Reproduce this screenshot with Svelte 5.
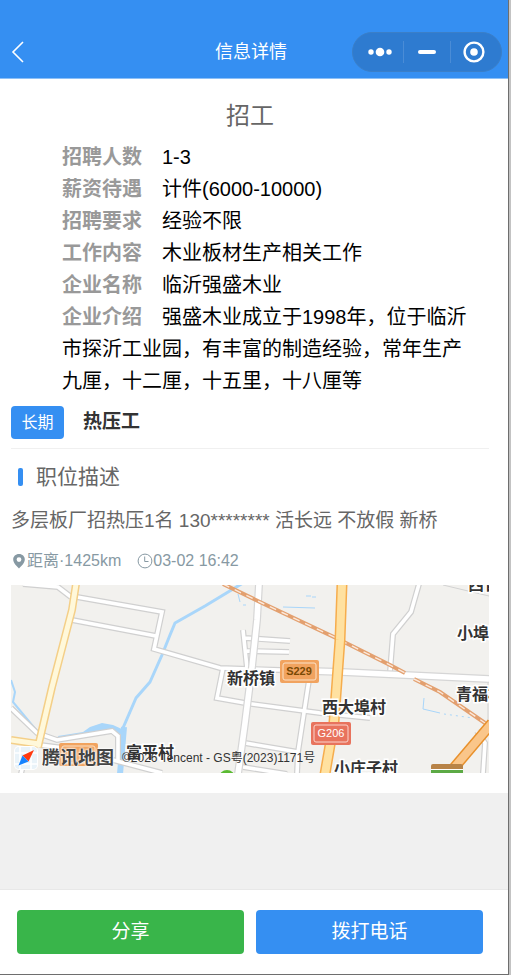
<script>
  const details = [
    ['招聘人数', '1-3'],
    ['薪资待遇', '计件(6000-10000)'],
    ['招聘要求', '经验不限'],
    ['工作内容', '木业板材生产相关工作'],
    ['企业名称', '临沂强盛木业'],
    ['企业介绍', '强盛木业成立于1998年，位于临沂市探沂工业园，有丰富的制造经验，常年生产九厘，十二厘，十五里，十八厘等']
  ];

  const streets = [
    'M23 584L58 587L71 597',
    'M77 597L162 612L154 649L220 668L280 670',
    'M72 620L156 636',
    'M11 708L37 733L57 740L112 731L118 736V760',
    'M40 745L64 748M113 760L162 773M23 765L21 774',
    'M243 630L247 668M245 638L290 641M247 651L289 652',
    'M223 668L217 698L245 703L320 713L370 718',
    'M309 680L298 752L297 774M245 743L298 752M243 767L287 774',
    'M419 584L411 612L393 634L390 672',
    'M477 731L485 743L483 774'
  ];

  const places = [
    { name: '新桥镇', x: 251, y: 684 },
    { name: '西大埠村', x: 354, y: 713 },
    { name: '小庄子村', x: 366, y: 774 },
    { name: '富平村', x: 150, y: 758 },
    { name: '小埠东', x: 481, y: 639 },
    { name: '青福村', x: 480, y: 700 },
    { name: '西官', x: 484, y: 590 }
  ];
</script>

<div class="screen">
  <div class="app">
    <header>
      <button class="back" aria-label="返回">
        <svg width="14" height="22" viewBox="0 0 14 22"><path d="M12 1L2 11L12 21" fill="none" stroke="#fff" stroke-width="1.6" /></svg>
      </button>
      <h1>信息详情</h1>
      <div class="capsule">
        <button aria-label="更多">
          <svg width="24" height="10" viewBox="0 0 24 10" fill="#fff"><circle cx="3" cy="5" r="2.7" /><circle cx="12" cy="5" r="4.3" /><circle cx="21" cy="5" r="2.7" /></svg>
        </button>
        <button aria-label="最小化">
          <svg width="18" height="4" viewBox="0 0 18 4"><rect width="18" height="4" rx="2" fill="#fff" /></svg>
        </button>
        <button aria-label="关闭">
          <svg width="22" height="22" viewBox="0 0 22 22"><circle cx="11" cy="11" r="9.4" fill="none" stroke="#fff" stroke-width="2.4" /><circle cx="11" cy="11" r="3.8" fill="#fff" /></svg>
        </button>
      </div>
    </header>

    <main>
      <h2>招工</h2>
      <div class="details">
        {#each details as [label, value]}
          <p><strong>{label}</strong>{value}</p>
        {/each}
      </div>
      <div class="job">
        <span class="tag">长期</span>
        <b>热压工</b>
      </div>
      <h3>职位描述</h3>
      <p class="desc">多层板厂招热压1名 130******** 活长远 不放假 新桥</p>
      <div class="meta">
        <span>
          <svg width="16" height="16" viewBox="0 0 16 16"><path fill="#8799a3" fill-rule="evenodd" d="M8 1C4.6 1 2.2 3.4 2.2 6.5C2.2 9.8 5.7 13.3 8 15.4C10.3 13.3 13.8 9.8 13.8 6.5C13.8 3.4 11.4 1 8 1ZM8 4.2A2.4 2.4 0 1 1 8 9A2.4 2.4 0 1 1 8 4.2Z" /></svg>距离·1425km
        </span>
        <span>
          <svg width="16" height="16" viewBox="0 0 16 16" fill="none" stroke="#8799a3"><circle cx="8" cy="8" r="6.9" /><path d="M7.7 3.5V8.5H11.5" /></svg>03-02 16:42
        </span>
      </div>

      <div class="map">
        <svg class="tiles" viewBox="11 585 478 188" preserveAspectRatio="xMidYMid slice" role="img" aria-label="地图">
          <rect x="11" y="585" width="478" height="188" fill="#f2f1ee" />
          <g fill="none" stroke="#a9d6fa" stroke-linejoin="round">
            <path stroke-width="3" d="M243 583L205 606L175 623L170 635L162 655L150 682L136 698L123 728" />
            <path stroke-width="6" d="M124 727L120 774" />
            <path stroke-width="2" d="M11 680L15 692L13 702L37 731L57 739" />
            <path fill="#a9d6fa" stroke="none" d="M58 736L83 732L90 727L102 723L113 725L124 730L122 739L108 731L60 741Z" />
            <path stroke-width="1" d="M238 594L240 602M243 605H246M283 607L315 608M306 596H311M312 597H316" />
            <path stroke-width="1" d="M424 698L423 709L440 713" />
            <path stroke-width="1" stroke-dasharray="2 4" d="M444 714L473 718" />
          </g>
          <g fill="none" stroke="#d0d0d0" stroke-width="6">
            {#each streets as d}<path {d} />{/each}
          </g>
          <g fill="none" stroke="#fff" stroke-width="3.6">
            {#each streets as d}<path {d} />{/each}
          </g>
          <path d="M443 585L489 596M488 681V722" fill="none" stroke="#d2d2d2" />
          <g fill="none">
            <path stroke="#d6d6d6" stroke-width="8" d="M259 584L257 620L252 667L245 723L238 774M280 670L342 672L489 679" />
            <path stroke="#fff" stroke-width="5.6" d="M259 584L257 620L252 667L245 723L238 774M280 670L342 672L489 679" />
            <path stroke="#f4cf88" stroke-width="8" d="M76 584L72 610L52 687L38 747M11 740L38 744" />
            <path stroke="#fff8da" stroke-width="5" d="M76 584L72 610L52 687L38 747M11 740L39 744" />
            <path stroke="#e3a06f" stroke-width="4" d="M223 584L262 603L336 638L390 665L405 673M414 679L440 692L485 723" />
            <path stroke="#fbe8da" stroke-width="1.4" stroke-dasharray="7 6" d="M223 584L262 603L336 638L390 665L405 673M414 679L440 692L485 723" />
            <path stroke="#f6ad4d" stroke-width="11" d="M342 584L340 640L334 722L325 774" />
            <path stroke="#ffe1a0" stroke-width="8" d="M342 584L340 640L334 722L325 774" />
            <path stroke="#e8902b" stroke-width="11" d="M492 723L453 769" />
            <path stroke="#fac68a" stroke-width="8" d="M492 723L453 769" />
          </g>
          <circle cx="227" cy="778" r="8" fill="#5aba32" />
          <rect x="431" y="764" width="32" height="12" rx="2" fill="#b88347" />
          <path fill="#5caa45" d="M431 769H463V774H431Z" />
          <path stroke="#fff" d="M431 769.5H463" />
          <g class="shield">
            <rect x="59" y="743" width="39" height="23" rx="2" fill="#f1a35f" />
            <rect x="62" y="746" width="33" height="17" rx="2" fill="none" stroke="#fbe2c9" />
            <rect x="280" y="660" width="39" height="23" rx="2" fill="#f1a35f" />
            <rect x="283" y="663" width="33" height="17" rx="2" fill="none" stroke="#fbe2c9" />
            <text x="299" y="675" fill="#7a4a05" font-weight="700">S229</text>
            <rect x="311" y="722" width="40" height="23" rx="2" fill="#e8735d" />
            <rect x="314" y="725" width="34" height="17" rx="2" fill="none" stroke="#fbd5cd" />
            <text x="331" y="737" fill="#fff">G206</text>
          </g>
          <g class="places">
            {#each places as place}<text x={place.x} y={place.y}>{place.name}</text>{/each}
          </g>
        </svg>
        <div class="credit">
          <svg width="24" height="24" viewBox="0 0 24 24">
            <rect x="0" y="0" width="24" height="24" rx="5" fill="#fff" />
            <rect x="1" y="1" width="22" height="22" rx="4" fill="#e9f3f9" />
            <path d="M6 1V23M17 1V23M1 7H23M1 18H23" stroke="#fff" stroke-width="1.6" />
            <path d="M20 4L8.5 9.5L14.5 15.5Z" fill="#ff3a10" />
            <path d="M8.5 9.5L4.5 19.5L14.5 15.5Z" fill="#1684ff" />
          </svg>
          <b>腾讯地图</b>
          <small>©2026 Tencent - GS粤(2023)1171号</small>
        </div>
      </div>
    </main>

    <footer>
      <button class="share">分享</button>
      <button class="call">拨打电话</button>
    </footer>
  </div>
  <div class="edge"></div>
</div>

<style>
  :global(body) { margin: 0; background: #f0f0f0; }
  .screen {
    display: flex;
    min-height: 100vh;
    font-family: "Liberation Sans", "Noto Sans CJK SC", sans-serif;
  }
  .app {
    flex: 1;
    min-width: 0;
    display: flex;
    flex-direction: column;
    box-sizing: border-box;
    background: #f0f0f0;
    border-right: 1px solid #6e6e6e;
    border-bottom: 1px solid #6e6e6e;
  }
  .edge { width: 2px; background: #c3c3c3; }
  h1, h2, h3, p { margin: 0; font-weight: 400; }
  button { border: 0; padding: 0; font: inherit; color: #fff; cursor: pointer; }
  svg { display: block; }

  header {
    display: grid;
    grid-template-columns: 1fr auto 1fr;
    align-items: center;
    padding: 26px 6px 0 0;
    height: 52px;
    color: #fff;
    background: #358ff2;
    border-bottom: 1px solid #8dc0f7;
  }
  .back { justify-self: start; padding: 8px 11px; background: none; }
  h1 { font-size: 18px; line-height: 24px; }
  .capsule {
    justify-self: end;
    display: flex;
    box-sizing: border-box;
    width: 150px;
    height: 40px;
    padding: 8px 4px;
    border: 1px solid #3b7fc8;
    border-radius: 20px;
    background: #2e7bd0;
  }
  .capsule button {
    flex: 1;
    display: flex;
    align-items: center;
    justify-content: center;
    background: none;
  }
  .capsule button + button { border-left: 1px solid #4a8cd6; }

  main { padding: 21px 19px 20px 11px; background: #fff; }
  h2 { font-size: 24px; line-height: 32px; text-align: center; color: #666; }
  .details { padding: 9px 18px 0 51px; font-size: 20px; line-height: 32px; color: #000; }
  .details strong { margin-right: 20px; color: #999; }
  .job {
    display: flex;
    gap: 19px;
    padding: 9px 0 9px;
    border-bottom: 1px solid #f0f0f0;
  }
  .tag {
    width: 53px;
    border-radius: 4px;
    background: #358ff2;
    color: #fff;
    font-size: 16px;
    line-height: 33px;
    text-align: center;
  }
  .job b { font-size: 19px; line-height: 32px; color: #333; }
  h3 {
    display: flex;
    align-items: center;
    gap: 13px;
    padding: 12px 0 0 7px;
    font-size: 21px;
    line-height: 32px;
    color: #666;
  }
  h3::before { content: ""; width: 5px; height: 18px; border-radius: 2px; background: #358ff2; }
  .desc { padding-top: 12px; font-size: 19px; line-height: 32px; color: #666; }
  .meta {
    display: flex;
    gap: 16px;
    padding: 12px 0;
    font-size: 16px;
    line-height: 24px;
    color: #8799a3;
  }
  .meta span { display: flex; align-items: center; }

  .map { position: relative; }
  .tiles { width: 100%; height: 188px; }
  .places text {
    font-size: 16px;
    font-weight: 700;
    text-anchor: middle;
    fill: #333;
    stroke: #fff;
    stroke-width: 3px;
    paint-order: stroke;
  }
  .shield text { font-size: 11px; text-anchor: middle; }
  .credit {
    position: absolute;
    left: 3px;
    bottom: 3px;
    display: flex;
    align-items: center;
    gap: 4px;
    color: #333;
  }
  .credit b {
    font-size: 18px;
    line-height: 24px;
    color: #444;
    text-shadow: 0 0 2px #fff, 0 0 2px #fff, 0 0 3px #fff;
  }
  .credit small { margin-left: 4px; font-size: 12px; line-height: 24px; }

  footer {
    display: flex;
    gap: 12px;
    margin-top: auto;
    padding: 20px 25px 20px 17px;
    border-top: 1px solid #e8e8e8;
    background: #fff;
  }
  footer button { flex: 1; height: 44px; border-radius: 4px; font-size: 19px; line-height: 28px; }
  .share { background: #39b54a; }
  .call { background: #358ff2; }
</style>
